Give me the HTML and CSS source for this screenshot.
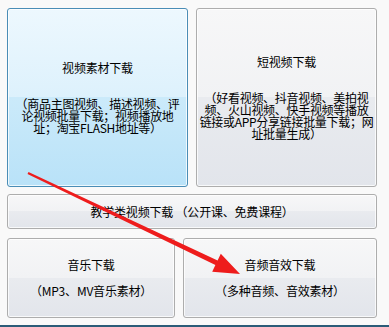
FILE: index.html
```html
<!DOCTYPE html>
<html lang="zh-CN">
<head>
<meta charset="utf-8">
<title>下载</title>
<link rel="stylesheet" href="styles.css">
</head>
<body>
<div class="page">
  <div class="panel">
    <div class="row-top">
      <div class="btn btn-active">
        <div class="title">视频素材下载</div>
        <div class="desc">（商品主图视频、描述视频、评<br>论视频批量下载；视频播放地<br>址；淘宝FLASH地址等）</div>
      </div>
      <div class="btn">
        <div class="title">短视频下载</div>
        <div class="desc">（好看视频、抖音视频、美拍视<br>频、火山视频、快手视频等播放<br>链接或APP分享链接批量下载；网<br>址批量生成）</div>
      </div>
    </div>
    <div class="btn btn-wide">
      <div class="title">教学类视频下载 （公开课、免费课程）</div>
    </div>
    <div class="row-bottom">
      <div class="btn btn-small">
        <div class="title">音乐下载</div>
        <div class="sub">（MP3、MV音乐素材）</div>
      </div>
      <div class="btn btn-small">
        <div class="title">音频音效下载</div>
        <div class="sub">（多种音频、音效素材）</div>
      </div>
    </div>
  </div>
  <div class="footer-line"></div>
  <svg class="arrow" width="389" height="327" viewBox="0 0 389 327" aria-hidden="true">
    <polygon points="28.5,171.9 217.6,260.5 220.8,253.8 240,274 212.2,271.8 215.4,265.1 27.5,174.1" fill="#ee1c1c"/>
  </svg>
</div>
</body>
</html>
```
FILE: styles.css
```css
html, body {
  margin: 0;
  padding: 0;
}
body {
  background: #f9f9f9;
  font-family: "Noto Sans CJK SC", "Noto Sans", sans-serif;
  font-size: 12px;
  color: #000;
}
.page {
  position: relative;
  width: 389px;
  height: 327px;
  overflow: hidden;
}
.panel {
  padding: 8px 0 0 7px;
  height: 317px;
  display: flex;
  flex-direction: column;
}
.row-top {
  display: grid;
  grid-template-columns: 181px 181px;
  column-gap: 8px;
  height: 179px;
}
.row-bottom {
  display: grid;
  grid-template-columns: 168px 194px;
  column-gap: 8px;
  height: 80px;
  margin-top: 9px;
}
.btn {
  box-sizing: border-box;
  border: 1px solid #adadad;
  border-radius: 3px;
  background: linear-gradient(#f7f7f8 0%, #f1f2f4 50%, #e9ebef 50%, #e2e5eb 100%);
  box-shadow: inset 0 0 0 1px rgba(255, 255, 255, 0.75);
  display: flex;
  flex-direction: column;
  align-items: center;
  justify-content: center;
  text-align: center;
  white-space: nowrap;
}
.btn-active {
  border-color: #4a8db6;
  background: linear-gradient(#edf8fe 0%, #ddf1fc 50%, #cbeafa 50%, #b9e2f8 100%);
}
.btn-wide {
  width: 370px;
  height: 35px;
  margin-top: 7px;
}
.title {
  line-height: 12px;
  letter-spacing: -0.2px;
}
.desc {
  margin-top: 24px;
  line-height: 12px;
  letter-spacing: -0.3px;
}
.sub {
  margin-top: 14px;
  line-height: 12px;
  letter-spacing: -0.2px;
}
.footer-line {
  position: absolute;
  left: 0;
  right: 0;
  bottom: 0;
  height: 2px;
  background: #2b5b78;
}
.arrow {
  position: absolute;
  left: 0;
  top: 0;
  pointer-events: none;
}
```
